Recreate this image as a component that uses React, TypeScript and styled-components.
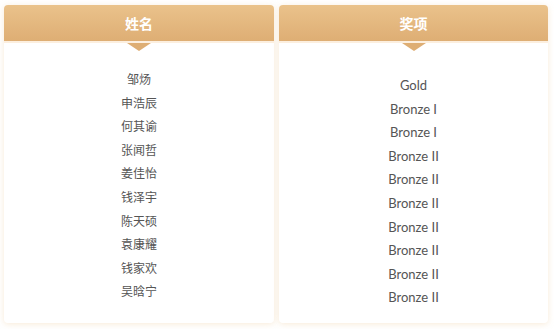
import React from "react";
import styled, { createGlobalStyle } from "styled-components";

const GlobalStyle = createGlobalStyle`
  html, body {
    margin: 0;
    padding: 0;
    background: #ffffff;
  }
  body {
    font-family: Lato, "Noto Sans CJK SC", sans-serif;
  }
`;

const Board = styled.div`
  display: flex;
  gap: 5px;
  padding: 5px 6px 6px 4px;
  width: 554px;
  height: 329px;
  box-sizing: border-box;
`;

const Card = styled.div<{ $width: number }>`
  width: ${(p) => p.$width}px;
  height: 318px;
  display: flex;
  flex-direction: column;
  background: #ffffff;
  border-radius: 4px;
  box-shadow: 0 1px 6px rgba(236, 196, 140, 0.35);
`;

const Header = styled.div`
  position: relative;
  height: 36px;
  display: flex;
  align-items: center;
  justify-content: center;
  background: linear-gradient(180deg, #eac28b 0%, #deae74 100%);
  border-radius: 4px 4px 0 0;
  border-bottom: 2px solid #fcefdf;
  color: #ffffff;
  font-family: "Noto Sans CJK SC", sans-serif;
  font-weight: 700;
  font-size: 14px;

  /* little pointer below the title */
  &::after {
    content: "";
    position: absolute;
    left: 50%;
    bottom: -10px;
    margin-left: -12px;
    border-left: 12px solid transparent;
    border-right: 12px solid transparent;
    border-top: 8px solid #deae74;
  }
`;

const List = styled.ul<{ $top: number }>`
  list-style: none;
  margin: 0;
  padding: ${(p) => p.$top}px 0 0;
  display: flex;
  flex-direction: column;
  align-items: center;
`;

const Item = styled.li<{ $size: number }>`
  line-height: 23.6px;
  font-size: ${(p) => p.$size}px;
  color: #555555;
  font-family: Lato, "Noto Sans CJK SC", sans-serif;
`;

const names = [
  "邹炀",
  "申浩辰",
  "何其谕",
  "张闻哲",
  "姜佳怡",
  "钱泽宇",
  "陈天硕",
  "袁康耀",
  "钱家欢",
  "吴晗宁",
];

const awards = [
  "Gold",
  "Bronze I",
  "Bronze I",
  "Bronze II",
  "Bronze II",
  "Bronze II",
  "Bronze II",
  "Bronze II",
  "Bronze II",
  "Bronze II",
];

export default function App() {
  return (
    <>
      <GlobalStyle />
      <Board>
        <Card $width={270}>
          <Header>姓名</Header>
          <List $top={25}>
            {names.map((n, i) => (
              <Item key={i} $size={12}>
                {n}
              </Item>
            ))}
          </List>
        </Card>
        <Card $width={269}>
          <Header>奖项</Header>
          <List $top={31}>
            {awards.map((a, i) => (
              <Item key={i} $size={13}>
                {a}
              </Item>
            ))}
          </List>
        </Card>
      </Board>
    </>
  );
}
